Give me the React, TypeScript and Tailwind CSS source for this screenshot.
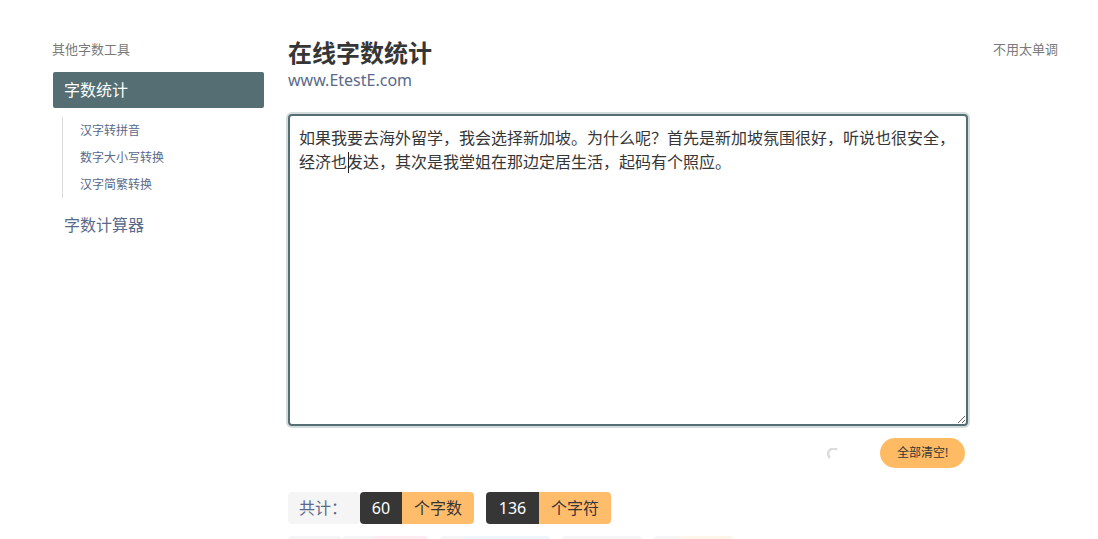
import React from "react";

function Tag({ parts }: { parts: [string, string][] }) {
  return (
    <div className="flex h-8 overflow-hidden rounded-[4px]">
      {parts.map(([w, c], i) => (
        <div key={i} className={c} style={{ width: w }} />
      ))}
    </div>
  );
}

export default function App() {
  return (
    <div className="h-[539px] w-[1098px] overflow-hidden bg-white font-['Noto_Sans','Noto_Sans_CJK_SC',sans-serif] text-[#363636]">
      <div className="flex pt-[40px] pl-[53px]">
        <aside className="w-[211px] shrink-0">
          <p className="-ml-px text-[13px] leading-[19px] text-[#7a7a7a]">其他字数工具</p>
          <ul className="mt-[13px]">
            <li className="h-9 rounded-[2px] bg-[#546e73] pl-[11px] text-[16px] leading-9 text-white">字数统计</li>
          </ul>
          <ul className="ml-[9px] mt-[9px] border-l border-[#dbdbdb] pl-[17px] text-[12px] leading-[27px] text-[#5a6a8a]">
            <li>汉字转拼音</li>
            <li>数字大小写转换</li>
            <li>汉字简繁转换</li>
          </ul>
          <p className="mt-[9px] pl-[11px] text-[16px] leading-9 text-[#5a6a8a]">字数计算器</p>
        </aside>
        <main className="ml-6 w-[680px] shrink-0">
          <h1 className="-mt-[3px] text-[24px] font-bold leading-[31px] text-[#363636]">在线字数统计</h1>
          <p className="text-[16px] leading-[24px] text-[#5a6a8a]">www.EtestE.com</p>
          <div className="relative mt-[22px]">
            <textarea
              readOnly
              className="block h-[312px] w-[680px] rounded-[4px] border-2 border-[#546e73] px-[9px] pb-[11px] pt-[10px] text-[16px] leading-6 text-[#363636] shadow-[0_0_0_2px_#d3dcdd] outline-none"
              defaultValue="如果我要去海外留学，我会选择新加坡。为什么呢？首先是新加坡氛围很好，听说也很安全，经济也发达，其次是我堂姐在那边定居生活，起码有个照应。"
            />
            <span className="absolute left-[60px] top-[38px] h-[21px] w-px bg-[#222]" />
          </div>
          <div className="mt-3 flex h-[30px] items-center justify-end pr-[3px]">
            <svg width="12" height="12" viewBox="0 0 12 12" className="mr-[41px] mt-px">
              <path d="M10 1.8 A5 5 0 1 0 3 10" fill="none" stroke="#dbdbdb" strokeWidth="2.4" />
            </svg>
            <button className="h-[30px] w-[85px] rounded-full bg-[#ffbb63] text-[12px] text-[#363636]">全部清空!</button>
          </div>
          <div className="mt-[24px] flex text-[16px] leading-8">
            <div className="flex h-8 w-[72px] items-center rounded-[4px] bg-[#f5f5f5] pl-[11px] text-[#5a6a8a]">共计：</div>
            <div className="flex h-8 overflow-hidden rounded-[4px]">
              <span className="w-[42px] bg-[#363636] text-center text-white">60</span>
              <span className="w-[72px] bg-[#ffbd6b] text-center">个字数</span>
            </div>
            <div className="ml-3 flex h-8 overflow-hidden rounded-[4px]">
              <span className="w-[53px] bg-[#363636] text-center text-white">136</span>
              <span className="w-[72px] bg-[#ffbd6b] text-center">个字符</span>
            </div>
          </div>
          <div className="mt-3 flex gap-3">
            <div className="flex">
              <Tag parts={[["54px", "bg-[#f5f5f5]"]]} />
              <Tag parts={[["31px", "bg-[#f5f5f5]"], ["55px", "bg-[#feecf0]"]]} />
            </div>
            <Tag parts={[["25px", "bg-[#f5f5f5]"], ["85px", "bg-[#eef6fc]"]]} />
            <Tag parts={[["80px", "bg-[#f5f5f5]"]]} />
            <Tag parts={[["26px", "bg-[#f5f5f5]"], ["53px", "bg-[#fff5e8]"]]} />
          </div>
        </main>
        <div className="ml-[25px] whitespace-nowrap text-[13px] leading-[19px] text-[#7a7a7a]">不用太单调</div>
      </div>
    </div>
  );
}
